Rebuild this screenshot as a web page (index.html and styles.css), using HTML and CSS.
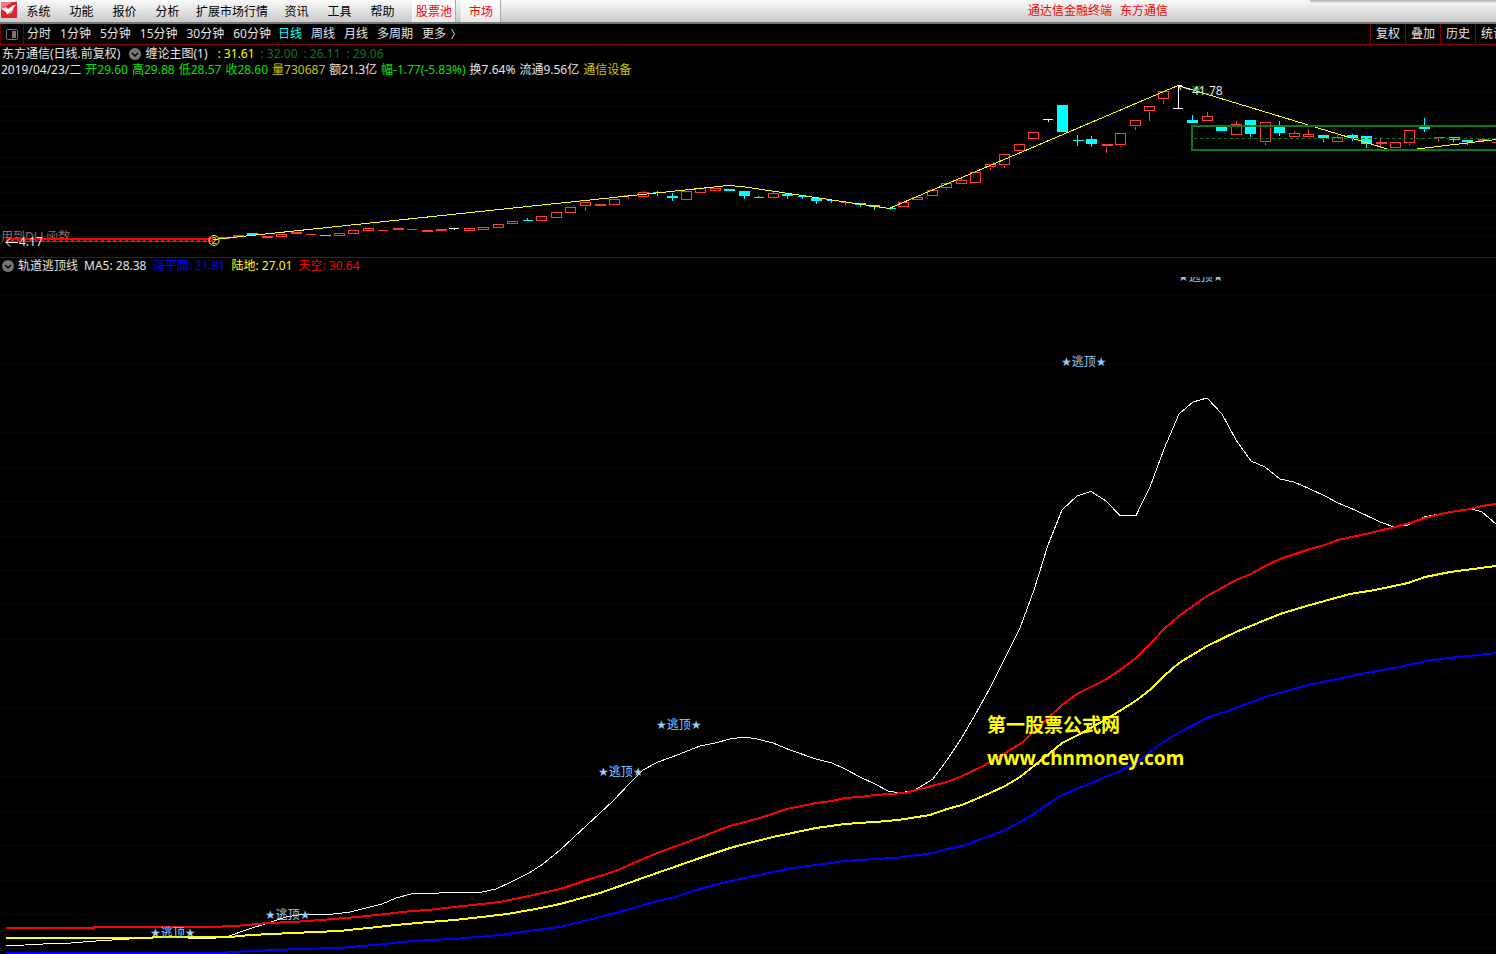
FILE: index.html
```html
<!DOCTYPE html>
<html lang="zh-CN">
<head>
<meta charset="utf-8">
<title>通达信金融终端 东方通信</title>
<link rel="stylesheet" href="styles.css">
</head>
<body>
<header class="titlebar">
  <svg class="logo" viewBox="0 0 17 17" aria-hidden="true">
    <rect x="1" y="1" width="16" height="16" fill="#d8262c"/>
    <path d="M1 1h12L1 8z" fill="#ee7a7e"/>
    <path d="M1 8l5-2 2 2c2-2 5-4 8-4-2 2-3 3-3 5-2 1-4 2-6 5 0-3-2-4-6-6z" fill="#fff"/>
    <path d="M8 13c1-2 3-3 6-4-2 2-3 4-6 4z" fill="#f3a3a5"/>
  </svg>
  <nav class="menu">
    <button>系统</button><button>功能</button><button>报价</button><button>分析</button><button>扩展市场行情</button><button>资讯</button><button>工具</button><button>帮助</button>
  </nav>
  <nav class="quick">
    <button class="narrow">股票池</button><button>市场</button>
  </nav>
  <div class="title"><span>通达信金融终端</span><span>东方通信</span></div>
  <div class="window-edge"></div>
</header>

<div class="toolbar">
  <button class="layout-toggle" aria-label="侧栏">
    <svg width="12" height="11" aria-hidden="true"><rect x="0.5" y="0.5" width="11" height="10" rx="1" fill="none" stroke="#777"/><rect x="6" y="2" width="4" height="7" fill="#777"/></svg>
  </button>
  <nav class="minutes">
    <button>分时</button><button>1分钟</button><button>5分钟</button><button>15分钟</button><button>30分钟</button><button>60分钟</button>
  </nav>
  <nav class="periods">
    <button class="active">日线</button><button>周线</button><button>月线</button><button>多周期</button><button>更多<svg class="more" width="6" height="12" aria-hidden="true"><path d="M1.500 1l3 5-3 5" fill="none" stroke="#ddd"/></svg></button>
  </nav>
  <nav class="tools">
    <button>复权</button><button>叠加</button><button>历史</button><button>统计</button>
  </nav>
</div>

<main class="charts">
<section class="price">
  <div class="info">
    <span>东方通信(日线.前复权)</span>
    <button class="drop" aria-label="主图指标"><svg width="12" height="12" aria-hidden="true"><circle cx="6" cy="6" r="6" fill="#777"/><path d="M3 5l3 3 3-3" fill="none" stroke="#000" stroke-width="1.500"/></svg></button>
    <span class="indicator">缠论主图(1)</span>
    <span class="yellow">: 31.61</span>
    <span class="darkgreen">: 32.00</span><span class="darkgreen">: 26.11</span><span class="darkgreen">: 29.06</span>
  </div>
  <div class="quote">
    <span>2019/04/23/二</span><span class="green">开29.60</span><span class="green">高29.88</span><span class="green">低28.57</span><span class="green">收28.60</span><span class="gold">量730687</span><span>额21.3亿</span><span class="green">幅-1.77(-5.83%)</span><span>换7.64%</span><span>流通9.56亿</span><span class="gold">通信设备</span>
  </div>
  <svg class="plot price-plot" role="img" aria-label="东方通信日线">
    <g transform="translate(0,-78)">
      <text class="note" x="1" y="241">用到DLL函数</text>
      <g transform="translate(.5,.5)">
        <path class="grid" d="M.5 91h4000M.5 106h4000M.5 120h4000M.5 133h4000M.5 145h4000M.5 157h4000M.5 167h4000M.5 176h4000M.5 192h4000M.5 205h4000M.5 215h4000M.5 227h4000M.5 236h4000"/>
      </g>
      <rect x="6" y="238" width="207" height="4" fill="#f00" shape-rendering="crispEdges"/>
      <path d="M8 240.500h200" stroke="#000" stroke-dasharray="3 3" shape-rendering="crispEdges"/>
      <g transform="translate(.5,.5)">
        <path class="up" d="M276 234h10v2h-10zM334 233h10v2h-10zM348 230h10v3h-10zM363 228h10v2h-10zM464 228h10v2h-10zM478 227h10v2h-10zM493 224h10v3h-10zM507 221h10v2h-10zM536 216h10v4h-10zM551 212h10v5h-10zM565 207h10v5h-10zM580 202h10v3h-10zM609 199h10v5h-10zM638 192h10v4h-10zM681 191h10v8h-10zM695 188h10v4h-10zM710 188h10v2h-10zM768 193h10v4h-10zM898 202h10v4h-10zM912 197h10v2h-10zM927 190h10v5h-10zM941 183h10v4h-10zM956 180h10v3h-10zM970 172h10v10h-10zM985 164h10v2h-10zM999 154h10v10h-10zM1014 144h10v6h-10zM1028 132h10v6h-10zM1115 133h10v11h-10zM1130 120h10v5h-10zM1144 106h10v4h-10zM1158 91h10v7h-10zM1202 116h10v4h-10zM1231 124h10v10h-10zM1260 122h10v19h-10zM1289 133h10v3h-10zM1303 134h10v2h-10zM1332 137h10v4h-10zM1390 142h10v5h-10zM1404 130h10v12h-10z"/>
        <path class="up" d="M218 237h11M218 238h11M232 235h11M232 236h11M261 236h11M261 237h11M290 232h11M290 233h11M305 234h10M377 230h10M392 228h11M392 229h11M406 229h10M421 230h11M421 231h11M435 229h11M435 230h11M594 204h11M594 205h11M623 195h11M840 202h10M1101 144h11M1101 145h11M1375 142h11M1375 143h11M1433 137h11M1477 139h11M1477 140h11M1491 142h11"/>
        <path class="up" d="M382 229v1M585 206v4M599 203v1M628 194v4M643 190v2M700 186v2M715 187v1M773 191v2M845 201v3M946 188v1M961 177v3M990 167v2M1004 165v2M1019 151v3M1106 146v6M1120 145v1M1135 126v3M1149 111v9M1163 99v4M1207 111v5M1236 120v4M1265 142v2M1294 130v3M1308 128v6M1337 134v3M1380 136v11M1409 143v1M1438 136v4M1482 137v2"/>
        <path class="down" d="M252 232v1M319 235h11M324 234v1M522 220h10M527 217v3M652 192h11M657 190v5M672 192v8M729 188v1M744 190v8M753 197h10M758 195v2M787 193v5M797 196h10M802 195v3M816 197v6M826 200h11M831 200v2M860 202v4M874 204v5M885 208h10M890 206v3M1072 140h11M1077 134v11M1091 135v11M1192 114v6M1221 124v2M1250 119v17M1279 120v15M1323 138v3M1352 133v7M1366 135v12M1424 117v14M1448 137h11M1448 139h11M1453 136v5M1467 139v5"/>
      </g>
      <path class="down-fill" d="M247 233h11v2h-11zM667 196h11v2h-11zM724 189h11v2h-11zM739 191h11v5h-11zM782 194h11v2h-11zM811 198h11v3h-11zM855 203h11v2h-11zM869 205h11v2h-11zM1057 105h11v27h-11zM1086 139h11v5h-11zM1187 120h11v3h-11zM1216 126h11v5h-11zM1245 120h11v14h-11zM1274 126h11v7h-11zM1318 135h11v3h-11zM1347 135h11v3h-11zM1361 136h11v8h-11zM1419 127h11v2h-11zM1462 140h11v2h-11z"/>
      <path class="flat" d="M449 228.500h10M454.500 229v1M1043 119.500h10M1048.500 119v3M1173 108.500h10M1178.500 86v22"/>
      <polyline class="line yellow-line" points="213,239.500 728,185.500 742,186.500 889,208.500 1178,85.500 1389,149.500 1413,149.500 1496,139.500 1536,134.500"/>
      <path class="range" d="M4000 126H1192v24H4000"/>
      <path d="M1194 138.500H4000" stroke="#087a20" stroke-dasharray="3 3" shape-rendering="crispEdges"/>
      <circle cx="214" cy="240.500" r="5" fill="none" stroke="#ff0"/>
      <text class="wave" x="214" y="244">2</text>
      <path d="M18 242.500H6l4-4M6 242.500l4 4M1178 85.500l12 4M1178 85.500h4M1179 86l2 4" fill="none" stroke="#fff"/>
      <text x="19" y="246">4.17</text>
      <path d="M1192 86l4 3 4-3M1193 89h9M1194 92l3-5 3 5" fill="none" stroke="#00c000"/>
      <text x="1192" y="95">41.78</text>
    </g>
  </svg>
</section>

<section class="study">
  <div class="info">
    <button class="drop" aria-label="副图指标"><svg width="12" height="12" aria-hidden="true"><circle cx="6" cy="6" r="6" fill="#777"/><path d="M3 5l3 3 3-3" fill="none" stroke="#000" stroke-width="1.500"/></svg></button>
    <span>轨道逃顶线</span><span>MA5: 28.38</span><span class="blue">海平面: 21.81</span><span class="yellow">陆地: 27.01</span><span class="red">天空: 30.64</span>
  </div>
  <svg class="plot study-plot" role="img" aria-label="轨道逃顶线">
    <g transform="translate(0,-277)">
      <g transform="translate(.5,.5)">
        <path class="grid" d="M.5 295h4000M.5 329h4000M.5 364h4000M.5 398h4000M.5 432h4000M.5 467h4000M.5 501h4000M.5 536h4000M.5 570h4000M.5 604h4000M.5 639h4000M.5 673h4000M.5 708h4000M.5 742h4000M.5 776h4000M.5 811h4000M.5 845h4000M.5 880h4000M.5 914h4000M.5 948h4000"/>
      </g>
      <polyline class="line white-line" points="6,945.500 25,945 43,944 71,943 96,941 129,939 154,937 188,938 216,938 229,936 246,930 268,923 286,917 304,914 325,915 350,912 382,904 396,898 411,894 439,893 454,892 468,893 482,892 496,889 511,882 529,873 543,864 560,850 587,825 613,801 630,783 643,770 658,762 672,757 700,746 715,743 730,739 745,737 757,739 773,743 790,750 816,759 832,763 845,769 860,777 875,784 888,791 900,793 915,790 933,779 947,760 961,739 975,715 990,688 1005,658 1020,628 1034,590 1048,545 1062,510 1077,496 1091,491.500 1106,501 1120,515.500 1136,515.500 1150,487 1164,449 1179,414 1193,402 1207,398 1222,414 1236,440 1251,461 1265,467 1280,479 1294,482 1310,489 1325,496 1338,503 1355,510 1380,522 1394,527 1408,525 1424,517 1450,512 1470,508.500 1482,512 1496,524 1510,536"/>
      <polyline class="line band" stroke="#00f" points="6,953 225,953 229,952 254,951 300,949 339,948 386,944 400,942 429,940 454,939 500,935 514,933 560,927 600,917 630,909 657,901 675,897 700,889 718,884 745,878 787,869 816,865 845,861 875,859 895,858 933,853 947,849 962,846 990,836 1005,830 1020,822 1034,814 1048,804 1062,795 1091,783 1120,771 1140,760 1160,744 1180,732 1207,718 1236,708 1265,697 1308,685 1337,679 1366,673 1400,667 1425,661 1450,658 1496,653 1520,650"/>
      <polyline class="line band" stroke="#ff0" points="6,938 150,938 155,937 230,937 250,935 293,933 339,931 368,928 396,925 429,922 454,920 482,917 507,914 536,909 560,904 600,893 657,873 700,858 730,848 745,844 773,837 816,828 845,824 888,821 905,819 930,815 947,809 962,805 990,793 1005,786 1020,777 1045,757 1062,743 1080,734 1110,717 1137,700 1151,689 1164,676 1179,663 1207,646 1236,632 1280,614 1310,605 1350,594 1375,590 1408,583 1425,577 1450,572 1496,566 1520,563"/>
      <polyline class="line band" stroke="#f00" points="6,928 94,928 94,927 208,927 236,926 268,923 293,922 321,920 357,917 386,914 411,911 429,910 454,907 482,904 500,902 529,896 560,889 587,880 613,872 657,853 685,843 730,826 760,818 787,809 816,803 832,801 845,798 860,797 875,795 905,793 920,789 947,782 960,777 983,766 1005,753 1023,742 1045,721 1062,705 1077,694 1105,680 1120,670 1136,658 1151,643 1164,629 1179,616 1207,596 1218,590 1236,580 1251,574 1265,566 1280,559 1310,549 1325,545 1338,540 1370,533 1395,527 1410,523 1425,518 1445,513 1470,509 1482,506 1496,504 1520,500"/>
      <g class="signal">
        <text x="150" y="937">★逃顶★</text>
        <text x="265" y="919">★逃顶★</text>
        <text x="598" y="776">★逃顶★</text>
        <text x="656" y="729">★逃顶★</text>
        <text x="1061" y="366">★逃顶★</text>
        <text x="1178" y="281">★逃顶★</text>
      </g>
      <g class="watermark">
        <text x="987" y="732">第一股票公式网</text>
        <text x="987" y="765">www.chnmoney.com</text>
      </g>
    </g>
  </svg>
</section>
</main>
</body>
</html>
```

FILE: styles.css
```css
* { box-sizing: border-box; }
body {
  margin: 0;
  height: 100vh;
  display: flex;
  flex-direction: column;
  overflow: hidden;
  background: #000;
  color: #e6e6e6;
  font: 12px/16px "Noto Sans", "Noto Sans CJK SC", sans-serif;
  white-space: nowrap;
}
button {
  margin: 0;
  padding: 0;
  border: 0;
  background: none;
  color: inherit;
  font: inherit;
}
nav { display: flex; }

.titlebar {
  display: flex;
  flex: none;
  height: 24px;
  background: linear-gradient(#fafafa, #c9c9c9);
  border-bottom: 2px solid #777;
  color: #000;
}
.logo { width: 17px; height: 17px; margin-top: 1px; flex: none; }
.menu button { min-width: 43px; padding: 2px 7px 0; }
.quick { margin-left: 8px; gap: 5px; color: #f00; }
.quick button {
  padding: 2px 7px 0;
  background: linear-gradient(#fff, #e9e9e9);
  border-left: 1px solid #fff;
  border-right: 1px solid #aaa;
}
.quick .narrow { padding: 2px 3px 0; }
.title {
  display: flex;
  align-items: center;
  gap: 8px;
  margin-left: auto;
  padding-right: 142px;
  color: #f00;
}
.window-edge {
  width: 186px;
  height: 3px;
  background: linear-gradient(#aaa, #eee);
  border-bottom-left-radius: 6px;
}

.toolbar {
  display: flex;
  flex: none;
  height: 21px;
  border-bottom: 1px solid #800000;
}
.layout-toggle {
  display: flex;
  align-items: center;
  justify-content: center;
  width: 24px;
  border-left: 1px solid #800000;
  border-right: 1px solid #800000;
}
.minutes { gap: 9px; margin-left: 3px; }
.periods { gap: 9px; margin-left: 7px; }
.active { color: #0ff; }
.more { margin-left: 4px; vertical-align: -2px; }
.tools { width: 126px; margin-left: auto; overflow: hidden; }
.tools button {
  flex: none;
  padding: 0 5px;
  border-left: 1px solid #800000;
}

.charts { display: flex; flex: 1; flex-direction: column; min-height: 0; }
.price { flex: none; padding-top: 1px; border-bottom: 1px solid #800000; }
.study { display: flex; flex: 1; flex-direction: column; min-height: 0; }
.info { display: flex; align-items: center; padding-left: 2px; gap: 5px; }
.price .info { height: 16px; gap: 6px; }
.price .drop { margin-left: 3px; }
.price .indicator { margin: 0 4px 0 -2px; }
.study .info { flex: none; height: 19px; padding: 0 0 3px 2px; gap: 6px; }
.study .drop { margin-right: -2px; }
.quote { display: flex; height: 16px; padding-left: 1px; gap: 4px; }
.drop { display: flex; }
.yellow { color: #ff0; }
.green { color: #00e600; }
.darkgreen { color: #087a20; }
.gold { color: #c8c800; }
.blue { color: #00f; }
.red { color: #f00; }

.plot { display: block; width: 100%; overflow: hidden; }
.price-plot { height: 179px; }
.study-plot { flex: 1; min-height: 0; }
.plot text { fill: #e6e6e6; }
.plot .note { fill: #777; }
.plot .wave { fill: #ff0; font-size: 9px; text-anchor: middle; }
.grid { fill: none; stroke: #780000; stroke-dasharray: 1 3; shape-rendering: crispEdges; }
.up { fill: none; stroke: #ff3c3c; shape-rendering: crispEdges; }
.down { fill: none; stroke: #0ff; shape-rendering: crispEdges; }
.down-fill { fill: #0ff; shape-rendering: crispEdges; }
.flat { fill: none; stroke: #fff; shape-rendering: crispEdges; }
.range { fill: none; stroke: #087a20; stroke-width: 2; shape-rendering: crispEdges; }
.line { fill: none; shape-rendering: crispEdges; }
.yellow-line { stroke: #ff0; }
.white-line { stroke: #fff; }
.band { stroke-width: 2; }
.plot .signal text { fill: #96ccff; font-family: "DejaVu Sans", "Noto Sans CJK SC", sans-serif; }
.plot .watermark text { fill: #ff0; font-size: 19px; font-weight: 700; }
```
